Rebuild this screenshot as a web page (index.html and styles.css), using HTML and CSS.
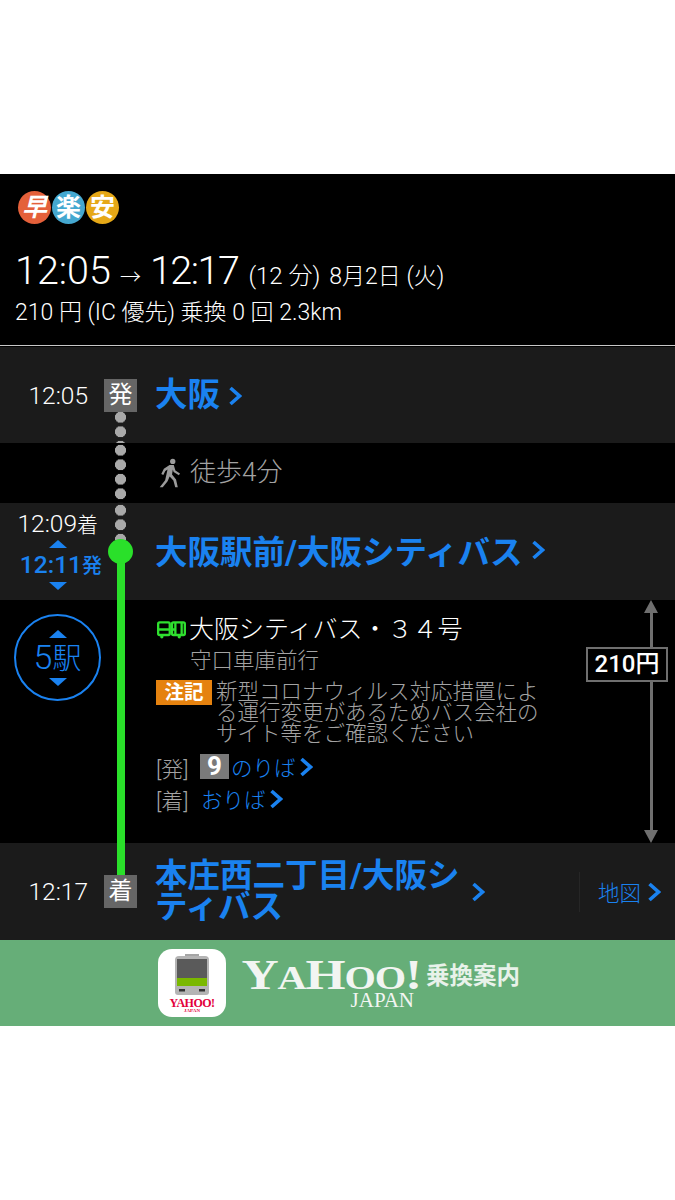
FILE: index.html
```html
<!DOCTYPE html>
<html lang="ja">
<head>
    <meta charset="UTF-8">
    <meta name="viewport" content="width=device-width, initial-scale=1.0">
    <link rel="stylesheet" href="styles.css">
</head>
<body>
    <div class="card">
        <header class="summary">
            <div class="badges">
                <span class="badge fast">早</span>
                <span class="badge easy">楽</span>
                <span class="badge cheap">安</span>
            </div>
            <p class="times"><span class="big">12:05</span><span class="arrow">→</span><span class="big tight">12:17</span><span class="mid">(12 分)</span><span class="date">8月2日 (火)</span></p>
            <p class="fare">210 円 (IC 優先) 乗換 0 回 2.3km</p>
        </header>

        <div class="timeline">
            <div class="green-line"></div>

            <section class="stop first">
                <div class="dots"></div>
                <div class="stop-time">12:05</div>
                <div class="mark">発</div>
                <a class="stop-name">大阪<svg class="chev" viewBox="0 0 14 20"><path d="M2.500 2 11.500 10 2.500 18"/></svg></a>
            </section>

            <section class="walk">
                <div class="dots"></div>
                <svg class="walker" viewBox="0 0 24 32" fill="#9b9b9b">
                    <circle cx="15" cy="3.400" r="2.900"/>
                    <path d="M11.500 7.200h4.600l1.800 6 5 3.400-1.200 1.900-5.800-3.600-.8-2.600-.9 5.400 4.400 5.400 1.900 8.400h-2.800l-2-7.400-4.100-4.200-2.200 5.200-5.300 6.400h-3.300l5.900-7.700 2.600-11.600-2.400 1.500-2.200 4.500-2.200-1 2.800-5.800z"/>
                </svg>
                <span class="walk-text">徒歩4分</span>
            </section>

            <section class="stop transfer">
                <div class="dots"></div>
                <div class="node"></div>
                <div class="stop-time double">
                    <span class="arrive">12:09<small>着</small></span>
                    <span class="tri up"></span>
                    <span class="depart">12:11<small>発</small></span>
                    <span class="tri down"></span>
                </div>
                <div class="mark-space"></div>
                <a class="stop-name">大阪駅前/大阪シティバス<svg class="chev" viewBox="0 0 14 20"><path d="M2.500 2 11.500 10 2.500 18"/></svg></a>
            </section>

            <section class="leg">
                <div class="leg-left">
                    <div class="count">
                        <span class="tri up"></span>
                        <span class="count-text">5<small>駅</small></span>
                        <span class="tri down"></span>
                    </div>
                </div>
                <div class="leg-info">
                    <div class="line-name">
                        <svg class="bus" viewBox="0 0 30 20" fill="none" stroke="#2fe02f" stroke-width="2.400">
                            <rect x="1.200" y="2.200" width="12" height="13" rx="1.500"/>
                            <rect x="15.500" y="2.200" width="13.300" height="13" rx="1.500"/>
                            <path d="M1.200 9.500h12M19 2.200v13M25.500 2.200v13M15.500 9.500h3.500"/>
                            <circle cx="5" cy="17" r="1.700" fill="#2fe02f" stroke="none"/>
                            <circle cx="23" cy="17" r="1.700" fill="#2fe02f" stroke="none"/>
                        </svg>
                        <span>大阪シティバス・３４号</span>
                    </div>
                    <div class="direction">守口車庫前行</div>
                    <div class="note">
                        <span class="note-tag">注記</span>
                        <p class="note-text">新型コロナウィルス対応措置によ<br>る運行変更があるためバス会社の<br>サイト等をご確認ください</p>
                    </div>
                    <div class="platform">
                        <span class="bracket">[発]</span>
                        <span class="track">9</span>
                        <a class="link">のりば<svg class="chev" viewBox="0 0 14 20"><path d="M2.500 2 11.500 10 2.500 18"/></svg></a>
                    </div>
                    <div class="platform second">
                        <span class="bracket">[着]</span>
                        <a class="link">おりば<svg class="chev" viewBox="0 0 14 20"><path d="M2.500 2 11.500 10 2.500 18"/></svg></a>
                    </div>
                </div>
                <div class="price-col">
                    <span class="price-head up"></span>
                    <span class="price-bar"></span>
                    <span class="price-head down"></span>
                    <span class="price">210円</span>
                </div>
            </section>

            <section class="stop last">
                <div class="stop-time">12:17</div>
                <div class="mark">着</div>
                <a class="stop-name wrap"><span>本庄西二丁目/大阪シティバス</span><svg class="chev" viewBox="0 0 14 20"><path d="M2.500 2 11.500 10 2.500 18"/></svg></a>
                <a class="map">地図<svg class="chev" viewBox="0 0 14 20"><path d="M2.500 2 11.500 10 2.500 18"/></svg></a>
            </section>
        </div>

        <footer class="banner">
            <div class="app-icon">
                <svg class="train" viewBox="0 0 36 44">
                    <rect x="11" y="0" width="14" height="3" fill="#a5a5a5"/>
                    <path d="M5 2h26q4 0 4 4v32q0 3-3 3H4q-3 0-3-3V6q0-4 4-4z" fill="#b4b4b4"/>
                    <rect x="3" y="5" width="30" height="19" fill="#5a5a5a"/>
                    <rect x="3" y="24" width="30" height="8" fill="#7ab800"/>
                    <rect x="5" y="35" width="6" height="2.500" fill="#333"/>
                    <rect x="25" y="35" width="6" height="2.500" fill="#333"/>
                </svg>
                <span class="mini-y">YAHOO!</span>
                <span class="mini-j">JAPAN</span>
            </div>
            <div class="yahoo">
                <span class="yahoo-word">Y<small>A</small>H<small>OO</small>!</span>
                <span class="yahoo-japan">JAPAN</span>
            </div>
            <span class="service">乗換案内</span>
        </footer>
    </div>
</body>
</html>
```

FILE: styles.css
```css
* {
    box-sizing: border-box;
}

body {
    margin: 0;
    padding: 174px 0 174px;
    background-color: #fff;
    font-family: "Roboto", "Noto Sans CJK JP", sans-serif;
    color: #fff;
}

p {
    margin: 0;
}

.card {
    background-color: #000;
}

/* ヘッダー */
.summary {
    height: 172px;
    padding: 17px 15px 0;
    border-bottom: 1px solid #c8c8c8;
}

.badges {
    display: flex;
    gap: 1px;
    padding-left: 3px;
}

.badge {
    width: 33px;
    height: 33px;
    border-radius: 50%;
    display: flex;
    align-items: center;
    justify-content: center;
    font-size: 25px;
    font-weight: 700;
    line-height: 1;
}

.fast { background-color: #e4603a; font-style: italic; }
.easy { background-color: #45a8d0; }
.cheap { background-color: #e6a817; }

.times {
    margin-top: 25px;
    height: 44px;
    line-height: 44px;
    font-weight: 300;
    white-space: nowrap;
}

.big { font-size: 39.500px; }
.tight { letter-spacing: -1.500px; }
.arrow { font-size: 21px; margin: 0 9px 0 9px; }
.mid { font-size: 24px; margin-left: 10px; }
.date { font-size: 23px; margin-left: 9px; }

.fare {
    margin-top: 6px;
    font-size: 23px;
    line-height: 28px;
    font-weight: 300;
    white-space: nowrap;
}

/* 経路 */
.timeline {
    position: relative;
    padding-top: 1px;
}

.green-line {
    position: absolute;
    z-index: 1;
    left: 117px;
    top: 205px;
    width: 8px;
    height: 330px;
    background-color: #2ae02a;
}

.stop {
    position: relative;
    height: 97px;
    background-color: #1b1b1b;
    display: flex;
    align-items: center;
}

.stop-time {
    width: 104px;
    padding-right: 16px;
    text-align: right;
    font-size: 24.500px;
    font-weight: 300;
}

.mark {
    position: relative;
    z-index: 2;
    width: 33px;
    height: 33px;
    background-color: #666;
    font-size: 24px;
    line-height: 33px;
    text-align: center;
}

.mark-space {
    width: 33px;
}

.stop-name {
    display: flex;
    align-items: center;
    gap: 8px;
    margin-left: 18px;
    color: #1a82f0;
    font-size: 32.500px;
    font-weight: 700;
    white-space: nowrap;
}

.chev {
    flex: none;
    width: 14px;
    height: 20px;
    fill: none;
    stroke: #1a82f0;
    stroke-width: 3.600;
}

.dots {
    position: absolute;
    left: 115px;
    top: 0;
    width: 11px;
    background-image: radial-gradient(circle at center, #a9a9a9 5.300px, transparent 5.800px);
    background-size: 11px 14.500px;
}

.first .dots { top: 63px; height: 33px; }
.walk .dots { height: 60px; }
.transfer .dots { height: 37px; }

.first {
    height: 96px;
    align-items: flex-start;
    padding-top: 32px;
}

.first .stop-time { line-height: 33px; }
.first .stop-name { line-height: 33px; }

.walk {
    position: relative;
    height: 60px;
    background-color: #000;
    display: flex;
    align-items: center;
    padding-left: 159px;
    gap: 9px;
}

.walker {
    width: 22px;
    height: 32px;
}

.walk-text {
    margin-bottom: 7px;
    color: #a3a3a3;
    font-size: 26px;
    font-weight: 300;
}

.node {
    position: absolute;
    z-index: 2;
    left: 108px;
    top: 36px;
    width: 25px;
    height: 25px;
    border-radius: 50%;
    background-color: #2ae02a;
}

.transfer .stop-name {
    margin-bottom: 4px;
}

.double {
    align-self: flex-start;
    padding: 8px 0 0;
    display: flex;
    flex-direction: column;
    align-items: flex-end;
    font-size: 24.500px;
    line-height: 26px;
}

.double small {
    font-size: 21px;
}

.double .arrive {
    padding-right: 6px;
}

.double .depart {
    margin-top: 5px;
    color: #1a82f0;
    font-weight: 500;
    line-height: 24px;
    padding-right: 2px;
}

.double .depart small {
    font-size: 20px;
}

.tri {
    display: block;
    width: 0;
    height: 0;
    border-left: 9px solid transparent;
    border-right: 9px solid transparent;
}

.tri.up { border-bottom: 8px solid #1a82f0; }
.tri.down { border-top: 8px solid #1a82f0; }

.double .tri {
    margin-right: 37px;
}

.double .tri.up { margin-top: 2px; }
.double .tri.down { margin-top: 4px; }

/* 区間 */
.leg {
    height: 243px;
    display: flex;
    background-color: #000;
}

.leg-left {
    width: 156px;
    padding: 14px 0 0 14px;
}

.count {
    width: 87px;
    height: 87px;
    border: 2px solid #1a82f0;
    border-radius: 50%;
    display: flex;
    flex-direction: column;
    align-items: center;
    justify-content: center;
    gap: 2px;
}

.count-text {
    color: #1a82f0;
    font-size: 34px;
    line-height: 34px;
    font-weight: 300;
}

.count-text small {
    font-size: 29px;
}

.leg-info {
    width: 429px;
}

.line-name {
    display: flex;
    align-items: center;
    gap: 3px;
    margin-top: 14px;
    padding-left: 1px;
    font-size: 25px;
    line-height: 32px;
    font-weight: 300;
    white-space: nowrap;
}

.bus {
    width: 29px;
    height: 20px;
}

.direction {
    margin-left: 34px;
    color: #a3a3a3;
    font-size: 21.500px;
    line-height: 29px;
    font-weight: 300;
}

.note {
    display: flex;
    gap: 4px;
    margin-top: 5px;
}

.note-tag {
    flex: none;
    width: 56px;
    height: 25px;
    background-color: #e5820f;
    font-size: 19.500px;
    line-height: 25px;
    font-weight: 700;
    text-align: center;
}

.note-text {
    margin-top: 1px;
    color: #a3a3a3;
    font-size: 21.500px;
    line-height: 21px;
    font-weight: 300;
    white-space: nowrap;
}

.platform {
    display: flex;
    align-items: center;
    margin-top: 10px;
    height: 25px;
}

.platform.second {
    margin-top: 7px;
}

.bracket {
    color: #a3a3a3;
    width: 44px;
    font-size: 22px;
    font-weight: 300;
}

.second .bracket {
    width: 45px;
}

.track {
    width: 29px;
    height: 25px;
    margin-right: 2px;
    background-color: #7a7a7a;
    font-size: 26px;
    line-height: 25px;
    font-weight: 700;
    text-align: center;
}

.link {
    display: flex;
    align-items: center;
    gap: 3px;
    color: #1a82f0;
    font-size: 21.500px;
    font-weight: 300;
}

.price-col {
    position: relative;
    flex: 1;
    min-width: 0;
    padding-left: 42px;
    display: flex;
    flex-direction: column;
    align-items: center;
}

.price-head {
    flex: none;
    width: 0;
    height: 0;
    border-left: 7px solid transparent;
    border-right: 7px solid transparent;
}

.price-head.up { border-bottom: 13px solid #6f6f6f; }
.price-head.down { border-top: 13px solid #6f6f6f; }

.price-bar {
    flex: 1;
    width: 3px;
    background-color: #6f6f6f;
}

/* 矢印の上に重ねる */
.price {
    position: absolute;
    left: 1px;
    top: 47px;
    width: 82px;
    height: 35px;
    background-color: #000;
    border: 2px solid #6f6f6f;
    font-size: 24px;
    line-height: 31px;
    font-weight: 500;
    text-align: center;
}

.last .stop-name.wrap {
    width: 330px;
    white-space: normal;
    line-height: 31px;
    gap: 0;
    flex: none;
}

.wrap span {
    width: 316px;
}

.map {
    margin-left: auto;
    width: 96px;
    padding-left: 18px;
    height: 40px;
    border-left: 1px solid #262626;
    display: flex;
    align-items: center;
    gap: 6px;
    color: #1a82f0;
    font-size: 21.500px;
    font-weight: 300;
    white-space: nowrap;
}

/* バナー */
.banner {
    height: 86px;
    background-color: #66ae78;
    display: flex;
    align-items: center;
    padding-left: 158px;
}

.app-icon {
    width: 68px;
    height: 68px;
    background-color: #fff;
    border-radius: 14px;
    display: flex;
    flex-direction: column;
    align-items: center;
    padding-top: 5px;
}

.train {
    width: 36px;
    height: 44px;
}

.mini-y {
    font-family: "Liberation Serif", serif;
    font-size: 12px;
    line-height: 10px;
    font-weight: 700;
    color: #e3003b;
    letter-spacing: -0.5px;
}

.mini-j {
    font-family: "Liberation Serif", serif;
    font-size: 5px;
    line-height: 6px;
    font-weight: 700;
    color: #e3003b;
}

.yahoo {
    margin: 0 0 0 17px;
    width: 176px;
    display: flex;
    flex-direction: column;
    align-items: flex-end;
    font-family: "Liberation Serif", serif;
    color: #f2f5f2;
}

.yahoo-word {
    align-self: center;
    font-size: 46px;
    line-height: 34px;
    font-weight: 700;
    white-space: nowrap;
    letter-spacing: -1px;
    transform: scale(1.12, 0.92);
}

.yahoo-word small {
    font-size: 36px;
}

.yahoo-japan {
    margin-top: -4px;
    padding-right: 5px;
    font-size: 21px;
    line-height: 18px;
}

.service {
    margin: 0 0 18px 7px;
    font-size: 23.500px;
    font-weight: 700;
    color: #e8f2ea;
    white-space: nowrap;
}
```
